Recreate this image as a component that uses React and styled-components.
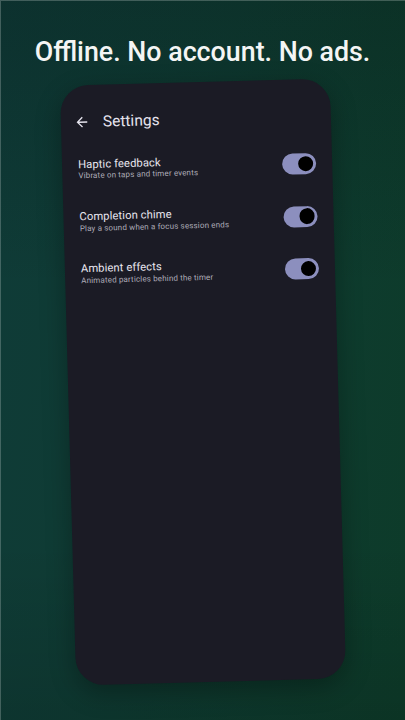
import React from "react";
import styled, { createGlobalStyle } from "styled-components";

const Global = createGlobalStyle`
  html, body { margin: 0; padding: 0; background: #0e3430; }
  * { box-sizing: border-box; }
`;

const Page = styled.div`
  position: relative;
  width: 405px;
  height: 720px;
  overflow: hidden;
  display: flex;
  flex-direction: column;
  align-items: center;
  font-family: Roboto, "Noto Sans", sans-serif;
  background:
    linear-gradient(180deg, rgba(4, 18, 16, 0.24) 0%, rgba(0, 0, 0, 0) 40%, rgba(0, 0, 0, 0) 75%, rgba(0, 0, 0, 0.12) 100%),
    linear-gradient(100deg, #0f3b38 0%, #0f3c33 45%, #0d3b29 100%);
  box-shadow: inset 1px 1px 0 rgba(255, 255, 255, 0.22);
`;

const Headline = styled.h1`
  margin: 36px 0 0;
  font-size: 26.8px;
  line-height: 32px;
  font-weight: 500;
  color: #f4f5f4;
  letter-spacing: 0;
  white-space: nowrap;
`;

const Phone = styled.div`
  margin-top: 14px;
  width: 270px;
  height: 600px;
  border-radius: 28px;
  background: #1b1b25;
  transform: rotate(-1.55deg);
  box-shadow: 0 8px 26px rgba(0, 0, 0, 0.3);
  display: flex;
  flex-direction: column;
  overflow: hidden;
`;

const TopBar = styled.div`
  height: 58.5px;
  padding: 27px 0 0 13px;
  display: flex;
  align-items: flex-start;
  gap: 13px;
  color: #e6e4ee;
`;

const BackIcon = styled.svg`
  width: 16px;
  height: 16px;
  margin-top: 2px;
  fill: currentColor;
  flex: none;
`;

const TopTitle = styled.span`
  font-size: 15.5px;
  font-weight: 400;
  line-height: 20px;
  color: #e6e4ee;
`;

const List = styled.div`
  display: flex;
  flex-direction: column;
`;

const Row = styled.div`
  height: 52.4px;
  padding: 0 16px 0 16px;
  display: flex;
  align-items: center;
  gap: 12px;
`;

const Texts = styled.div`
  flex: 1;
  display: flex;
  flex-direction: column;
  min-width: 0;
`;

const RowTitle = styled.span`
  font-size: 11.2px;
  line-height: 12.5px;
  color: #e8e6ef;
  letter-spacing: 0.1px;
`;

const RowSub = styled.span`
  font-size: 8px;
  line-height: 9.5px;
  color: #aeacb8;
  letter-spacing: 0.15px;
`;

const Track = styled.div`
  width: 34px;
  height: 21px;
  border-radius: 11px;
  background: ${(p) => (p.$on ? "#8c8fbe" : "#44434f")};
  display: flex;
  align-items: center;
  justify-content: ${(p) => (p.$on ? "flex-end" : "flex-start")};
  padding: 0 2.6px;
  flex: none;
`;

const Thumb = styled.div`
  width: 15.6px;
  height: 15.6px;
  border-radius: 50%;
  background: #000;
`;

const settings = [
  { title: "Haptic feedback", sub: "Vibrate on taps and timer events" },
  { title: "Completion chime", sub: "Play a sound when a focus session ends" },
  { title: "Ambient effects", sub: "Animated particles behind the timer" },
];

export default function App() {
  return (
    <>
      <Global />
      <Page>
        <Headline>Offline. No account. No ads.</Headline>
        <Phone>
          <TopBar>
            <BackIcon viewBox="0 0 24 24" aria-hidden="true">
              <path d="M20 11H7.83l5.59-5.59L12 4l-8 8 8 8 1.41-1.41L7.83 13H20v-2z" />
            </BackIcon>
            <TopTitle>Settings</TopTitle>
          </TopBar>
          <List>
            {settings.map((s) => (
              <Row key={s.title}>
                <Texts>
                  <RowTitle>{s.title}</RowTitle>
                  <RowSub>{s.sub}</RowSub>
                </Texts>
                <Track $on>
                  <Thumb />
                </Track>
              </Row>
            ))}
          </List>
        </Phone>
      </Page>
    </>
  );
}
